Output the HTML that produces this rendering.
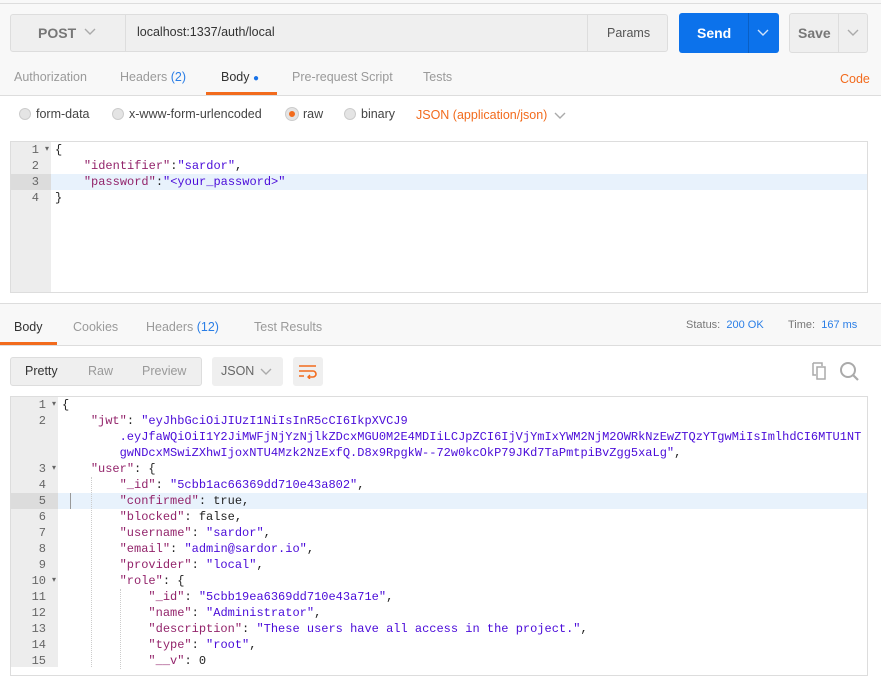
<!DOCTYPE html>
<html><head><meta charset="utf-8"><style>
*{box-sizing:border-box;margin:0;padding:0}
body{width:881px;height:665px;overflow:hidden;background:#fff;font-family:"Liberation Sans",sans-serif;position:relative;color:#505050}
.a{position:absolute}
.code{font-family:"Liberation Mono",monospace;font-size:12px;white-space:pre;line-height:16px}
.k{color:#93246b}.s{color:#4a0bd9}.p{color:#222}
.ln{position:relative;height:16px;width:100%;text-align:right;color:#666;font-family:"Liberation Mono",monospace;font-size:12px;line-height:16px;padding-right:12px}
.ar{font-size:8px;position:absolute;right:2px;top:0}
.tab{position:absolute;font-size:12.5px;color:#9a9a9a}
</style></head><body>
<div class="a" style="left:0;top:0;width:881px;height:305px;background:#f8f8f8"></div>
<div class="a" style="left:0;top:0;width:881px;height:4px;border-bottom:1px solid #ddd"></div>
<div class="a" style="left:10px;top:14px;width:658px;height:38px;background:#efefef;border:1px solid #ddd;border-radius:3px"></div>
<div class="a" style="left:125px;top:14px;width:1px;height:38px;background:#ddd"></div>
<div class="a" style="left:587px;top:14px;width:1px;height:38px;background:#ddd"></div>
<div class="a" style="left:38px;top:25px;font-size:14px;font-weight:bold;color:#777">POST</div>
<svg class="a" style="left:84px;top:28px" width="12" height="8"><path d="M1 1l5 5 5-5" fill="none" stroke="#aaa" stroke-width="1.4"/></svg>
<div class="a" style="left:137px;top:25px;font-size:12.5px;color:#333">localhost:1337/auth/local</div>
<div class="a" style="left:607px;top:26px;font-size:12.5px;color:#555">Params</div>
<div class="a" style="left:679px;top:13px;width:100px;height:40px;background:#0c72eb;border-radius:3px"></div>
<div class="a" style="left:748px;top:13px;width:1px;height:40px;background:#0a5fc4"></div>
<div class="a" style="left:697px;top:25px;font-size:14px;font-weight:bold;color:#fff">Send</div>
<svg class="a" style="left:757px;top:29px" width="12" height="8"><path d="M1 1l5 5 5-5" fill="none" stroke="#cfe2fb" stroke-width="1.4"/></svg>
<div class="a" style="left:789px;top:13px;width:79px;height:40px;background:#efefef;border:1px solid #ddd;border-radius:3px"></div>
<div class="a" style="left:838px;top:14px;width:1px;height:38px;background:#ddd"></div>
<div class="a" style="left:798px;top:25px;font-size:14px;font-weight:bold;color:#777">Save</div>
<svg class="a" style="left:847px;top:29px" width="12" height="8"><path d="M1 1l5 5 5-5" fill="none" stroke="#aaa" stroke-width="1.4"/></svg>
<div class="tab" style="left:14px;top:70px">Authorization</div>
<div class="tab" style="left:120px;top:70px">Headers <span style="color:#2a7ee6">(2)</span></div>
<div class="tab" style="left:221px;top:70px;color:#333">Body <span style="color:#1a73e8;font-size:10px">●</span></div>
<div class="a" style="left:206px;top:92px;width:71px;height:3px;background:#f26b1d"></div>
<div class="tab" style="left:292px;top:70px">Pre-request Script</div>
<div class="tab" style="left:423px;top:70px">Tests</div>
<div class="tab" style="left:840px;top:72px;color:#f26b1d">Code</div>
<div class="a" style="left:0;top:95px;width:881px;height:1px;background:#ddd"></div>
<div class="a" style="left:0;top:96px;width:881px;height:209px;background:#fff"></div>
<div class="a" style="left:19px;top:108px;width:12px;height:12px;border-radius:50%;background:#e4e4e4;border:1px solid #ccc"></div>
<div class="a" style="left:36px;top:107px;font-size:12.5px;color:#444">form-data</div>
<div class="a" style="left:112px;top:108px;width:12px;height:12px;border-radius:50%;background:#e4e4e4;border:1px solid #ccc"></div>
<div class="a" style="left:129px;top:107px;font-size:12.5px;color:#444">x-www-form-urlencoded</div>
<div class="a" style="left:286px;top:108px;width:12px;height:12px;border-radius:50%;background:#f26b1d;border:3px solid #e4e4e4;box-shadow:0 0 0 1px #ccc"></div>
<div class="a" style="left:303px;top:107px;font-size:12.5px;color:#444">raw</div>
<div class="a" style="left:344px;top:108px;width:12px;height:12px;border-radius:50%;background:#e4e4e4;border:1px solid #ccc"></div>
<div class="a" style="left:361px;top:107px;font-size:12.5px;color:#444">binary</div>
<div class="a" style="left:416px;top:108px;font-size:12.5px;color:#f26b1d">JSON (application/json)</div>
<svg class="a" style="left:554px;top:112px" width="12" height="8"><path d="M1 1l5 5 5-5" fill="none" stroke="#aaa" stroke-width="1.4"/></svg>
<div class="a" style="left:10px;top:141px;width:858px;height:152px;border:1px solid #ddd;background:#fff"></div>
<div class="a" style="left:11px;top:142px;width:40px;height:150px;background:#ededed"></div>
<div class="a" style="left:51px;top:174px;width:816px;height:16px;background:#e8f2fc"></div>
<div class="a" style="left:11px;top:174px;width:40px;height:16px;background:#dcdcdc"></div>
<div class="a" style="left:11px;top:142px;width:40px">
<div class="ln">1<span class="ar">▾</span></div><div class="ln">2</div><div class="ln">3</div><div class="ln">4</div></div>
<div class="a code" style="left:55px;top:142px"><span class="p">{</span>
    <span class="k">"identifier"</span><span class="p">:</span><span class="s">"sardor"</span><span class="p">,</span>
    <span class="k">"password"</span><span class="p">:</span><span class="s">"&lt;your_password&gt;"</span>
<span class="p">}</span></div>
<div class="a" style="left:0;top:303px;width:881px;height:43px;background:#f8f8f8;border-top:1px solid #ddd;border-bottom:1px solid #ddd"></div>
<div class="tab" style="left:14px;top:320px;color:#333">Body</div>
<div class="a" style="left:0;top:342px;width:57px;height:3px;background:#f26b1d"></div>
<div class="tab" style="left:73px;top:320px">Cookies</div>
<div class="tab" style="left:146px;top:320px">Headers <span style="color:#2a7ee6">(12)</span></div>
<div class="tab" style="left:254px;top:320px">Test Results</div>
<div class="a" style="left:686px;top:319px;font-size:11px;color:#777">Status: <span style="color:#2a7ee6">&nbsp;200 OK</span></div>
<div class="a" style="left:788px;top:319px;font-size:11px;color:#777">Time: <span style="color:#2a7ee6">&nbsp;167 ms</span></div>
<div class="a" style="left:10px;top:357px;width:192px;height:29px;background:#efefef;border:1px solid #ddd;border-radius:3px"></div>
<div class="a" style="left:25px;top:364px;font-size:12.5px;color:#333">Pretty</div>
<div class="a" style="left:88px;top:364px;font-size:12.5px;color:#999">Raw</div>
<div class="a" style="left:142px;top:364px;font-size:12.5px;color:#999">Preview</div>
<div class="a" style="left:212px;top:357px;width:71px;height:29px;background:#efefef;border-radius:3px"></div>
<div class="a" style="left:221px;top:364px;font-size:12.5px;color:#666">JSON</div>
<svg class="a" style="left:260px;top:368px" width="12" height="8"><path d="M1 1l5 5 5-5" fill="none" stroke="#aaa" stroke-width="1.4"/></svg>
<div class="a" style="left:293px;top:357px;width:30px;height:29px;background:#efefef;border-radius:3px"></div>
<svg class="a" style="left:298px;top:363px" width="20" height="16"><path d="M1 3h17M1 8h14a3 3 0 0 1 0 6h-5M1 13h5" fill="none" stroke="#f26b1d" stroke-width="1.6"/><path d="M12 12l-2 2 2 2" fill="none" stroke="#f26b1d" stroke-width="1.4"/></svg>
<svg class="a" style="left:811px;top:361px" width="20" height="20"><path d="M2 2h9v3M2 2v12h3" fill="none" stroke="#aaa" stroke-width="1.5"/><rect x="6" y="6" width="8" height="12" fill="none" stroke="#aaa" stroke-width="1.5"/></svg>
<svg class="a" style="left:839px;top:361px" width="22" height="22"><circle cx="9" cy="9" r="7" fill="none" stroke="#aaa" stroke-width="2"/><path d="M14 14l5 5" stroke="#aaa" stroke-width="2.2"/></svg>
<div class="a" style="left:10px;top:396px;width:858px;height:280px;border:1px solid #ddd;background:#fff"></div>
<div class="a" style="left:11px;top:397px;width:47px;height:270px;background:#ededed"></div>
<div class="a" style="left:58px;top:493px;width:809px;height:16px;background:#e8f2fc"></div>
<div class="a" style="left:11px;top:493px;width:47px;height:16px;background:#dcdcdc"></div>
<div class="a" style="left:70px;top:493px;width:1px;height:16px;background:#999"></div>
<div class="a" style="left:91px;top:477px;width:0;height:190px;border-left:1px dotted #ccc"></div>
<div class="a" style="left:120px;top:589px;width:0;height:80px;border-left:1px dotted #ccc"></div>
<div class="a" style="left:11px;top:397px;width:47px">
<div class="ln">1<span class="ar">▾</span></div><div class="ln">2</div><div class="ln"></div><div class="ln"></div><div class="ln">3<span class="ar">▾</span></div><div class="ln">4</div><div class="ln">5</div><div class="ln">6</div><div class="ln">7</div><div class="ln">8</div><div class="ln">9</div><div class="ln">10<span class="ar">▾</span></div><div class="ln">11</div><div class="ln">12</div><div class="ln">13</div><div class="ln">14</div><div class="ln">15</div></div>
<div class="a code" style="left:62px;top:397px"><span class="p">{</span>
    <span class="k">"jwt"</span><span class="p">: </span><span class="s">"eyJhbGciOiJIUzI1NiIsInR5cCI6IkpXVCJ9</span>
<span class="s">        .eyJfaWQiOiI1Y2JiMWFjNjYzNjlkZDcxMGU0M2E4MDIiLCJpZCI6IjVjYmIxYWM2NjM2OWRkNzEwZTQzYTgwMiIsImlhdCI6MTU1NT</span>
<span class="s">        gwNDcxMSwiZXhwIjoxNTU4Mzk2NzExfQ.D8x9RpgkW--72w0kcOkP79JKd7TaPmtpiBvZgg5xaLg"</span><span class="p">,</span>
    <span class="k">"user"</span><span class="p">: {</span>
        <span class="k">"_id"</span><span class="p">: </span><span class="s">"5cbb1ac66369dd710e43a802"</span><span class="p">,</span>
        <span class="k">"confirmed"</span><span class="p">: true,</span>
        <span class="k">"blocked"</span><span class="p">: false,</span>
        <span class="k">"username"</span><span class="p">: </span><span class="s">"sardor"</span><span class="p">,</span>
        <span class="k">"email"</span><span class="p">: </span><span class="s">"admin@sardor.io"</span><span class="p">,</span>
        <span class="k">"provider"</span><span class="p">: </span><span class="s">"local"</span><span class="p">,</span>
        <span class="k">"role"</span><span class="p">: {</span>
            <span class="k">"_id"</span><span class="p">: </span><span class="s">"5cbb19ea6369dd710e43a71e"</span><span class="p">,</span>
            <span class="k">"name"</span><span class="p">: </span><span class="s">"Administrator"</span><span class="p">,</span>
            <span class="k">"description"</span><span class="p">: </span><span class="s">"These users have all access in the project."</span><span class="p">,</span>
            <span class="k">"type"</span><span class="p">: </span><span class="s">"root"</span><span class="p">,</span>
            <span class="k">"__v"</span><span class="p">: 0</span></div>
</body></html>
